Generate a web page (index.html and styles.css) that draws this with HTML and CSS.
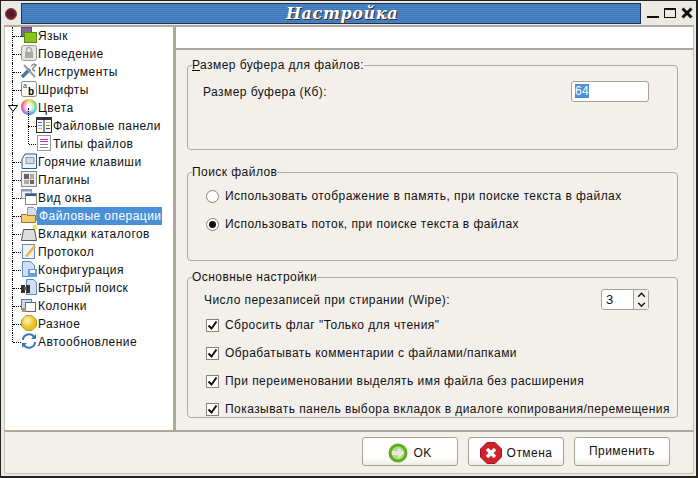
FILE: index.html
```html
<!DOCTYPE html>
<html lang="ru">
<head>
<meta charset="utf-8">
<title>Настройка</title>
<link rel="stylesheet" href="styles.css">
</head>
<body>
<div class="window">
  <header class="titlebar">
    <svg class="app-icon" width="12" height="12" viewBox="0 0 12 12"><circle cx="6" cy="6" r="5.5" fill="#7a1420" stroke="#555"/><circle cx="6" cy="6" r="2.500" fill="#4a1a3a"/></svg>
    <div class="title"><span>Настройка</span></div>
    <div class="wm-buttons">
      <svg width="12" height="12" viewBox="0 0 12 12"><rect x="0" y="9" width="12" height="2" fill="#111"/></svg>
      <svg width="12" height="12" viewBox="0 0 12 12"><rect x="0.5" y="1.500" width="11" height="9" fill="none" stroke="#111"/><rect x="0" y="1" width="12" height="2" fill="#111"/></svg>
      <svg width="12" height="12" viewBox="0 0 12 12"><path d="M1.500 1.500l9 9M10.500 1.500l-9 9" stroke="#111" stroke-width="3"/></svg>
    </div>
  </header>
  <div class="client">
    <div class="main">
      <nav class="tree">
        <div class="row"><span class="dots"></span><svg class="ico" viewBox="0 0 16 16"><rect x="0.5" y="0.5" width="10" height="9" fill="#7d6a9c" stroke="#5a4a76"/><rect x="3.500" y="5.500" width="12" height="10" fill="#8cc21e" stroke="#5b8a10"/></svg><span class="lbl">Язык</span></div>
        <div class="row"><span class="dots"></span><svg class="ico" viewBox="0 0 16 16"><rect x="0.5" y="0.5" width="15" height="15" rx="2" fill="#e8e6e0" stroke="#999"/><rect x="4" y="7" width="8" height="6" fill="#aaa"/><path d="M5.500 7V5a2.500 2.500 0 0 1 5 0v2" fill="none" stroke="#aaa" stroke-width="1.500"/></svg><span class="lbl">Поведение</span></div>
        <div class="row"><span class="dots"></span><svg class="ico" viewBox="0 0 16 16"><path d="M1 14L9 6" stroke="#4a76a8" stroke-width="3.500"/><path d="M3 2l11 12" stroke="#9a9a9a" stroke-width="2"/><path d="M10 3l3-2 2 1-3 3v2l2 1" fill="none" stroke="#888" stroke-width="1.500"/></svg><span class="lbl">Инструменты</span></div>
        <div class="row"><span class="dots"></span><svg class="ico" viewBox="0 0 16 16"><rect x="0.5" y="0.5" width="15" height="15" rx="2" fill="#fff" stroke="#888"/><text x="2" y="7" class="ico-a">a</text><text x="7" y="14" class="ico-b">b</text></svg><span class="lbl">Шрифты</span></div>
        <div class="row"><svg class="expander" width="10" height="7" viewBox="0 0 10 7"><path d="M0.500 0.500h9L5 6.500z" fill="#fff" stroke="#000"/></svg><span class="wheel"></span><span class="lbl">Цвета</span></div>
        <div class="row sub"><span class="dots"></span><svg class="ico" viewBox="0 0 16 16"><rect x="0.5" y="0.5" width="15" height="15" fill="#fff" stroke="#223"/><rect x="0" y="0" width="16" height="3" fill="#334"/><rect x="7.500" y="0" width="1" height="16" fill="#223"/><path d="M2 5.500h4" stroke="#e020a0"/><path d="M2 8.500h4" stroke="#20b0d0"/><path d="M2 11.500h4" stroke="#e0c020"/><path d="M10 5.500h4" stroke="#e0c020"/><path d="M10 8.500h4" stroke="#30b030"/><path d="M10 11.500h4" stroke="#2040e0"/></svg><span class="lbl">Файловые панели</span></div>
        <div class="row sub"><span class="dots"></span><svg class="ico" viewBox="0 0 16 16"><rect x="1.500" y="0.5" width="13" height="15" fill="#fff" stroke="#999"/><path d="M4 4.500h8" stroke="#e020a0"/><path d="M4 6.500h8" stroke="#c020e0"/><path d="M4 9.500h8" stroke="#888"/><path d="M4 12.500h8" stroke="#888"/></svg><span class="lbl">Типы файлов</span></div>
        <div class="row"><span class="dots"></span><svg class="ico" viewBox="0 0 16 16"><path d="M1 15.500V6l3-5h11.500v14.500z" fill="#eef1f5" stroke="#2a5a9a"/><path d="M5 4.500h8v6H5z" fill="#d8dde4" stroke="#8898aa"/></svg><span class="lbl">Горячие клавиши</span></div>
        <div class="row"><span class="dots"></span><svg class="ico" viewBox="0 0 16 16"><rect x="0.5" y="0.5" width="15" height="15" fill="#eee" stroke="#888"/><rect x="3" y="3" width="5" height="5" fill="#666"/><rect x="9" y="3" width="4" height="5" fill="#aaa"/><rect x="3" y="9" width="5" height="4" fill="#aaa"/><rect x="9" y="9" width="4" height="4" fill="#666"/></svg><span class="lbl">Плагины</span></div>
        <div class="row"><span class="dots"></span><svg class="ico" viewBox="0 0 16 16"><rect x="0.5" y="0.5" width="10" height="9" fill="#eee" stroke="#999"/><rect x="0.5" y="0.5" width="10" height="2" fill="#8aa0bc"/><rect x="4.500" y="4.500" width="11" height="11" fill="#fff" stroke="#888"/><rect x="5" y="5" width="10" height="2" fill="#2a5a9a"/></svg><span class="lbl">Вид окна</span></div>
        <div class="row"><span class="dots"></span><svg class="ico" viewBox="0 0 16 16"><path d="M6.500 0.500h6l3 3v10h-9z" fill="#cfe0f5" stroke="#7a9ac8"/><path d="M0.500 7.500h5l1 1h8v7h-14z" fill="#f5cc70" stroke="#a07820"/></svg><span class="lbl selected">Файловые операции</span></div>
        <div class="row"><span class="dots"></span><svg class="ico" viewBox="0 0 16 16"><path d="M0.500 15.500l2-11h11l2 11z" fill="#ddd" stroke="#555"/><rect x="12" y="0" width="4" height="4" fill="#f0e040"/></svg><span class="lbl">Вкладки каталогов</span></div>
        <div class="row"><span class="dots"></span><svg class="ico" viewBox="0 0 16 16"><rect x="1.500" y="1.500" width="12" height="14" fill="#eef3fa" stroke="#6a8ab8"/><path d="M4 13L13 2l2 2-9 10z" fill="#f0b040"/></svg><span class="lbl">Протокол</span></div>
        <div class="row"><span class="dots"></span><svg class="ico" viewBox="0 0 16 16"><path d="M1.500 0.500h8l4 4v11h-12z" fill="#cfe0f5" stroke="#5a8ac8"/><rect x="7" y="8" width="9" height="8" fill="#6aa0d8"/><rect x="9" y="9" width="5" height="3" fill="#fff"/></svg><span class="lbl">Конфигурация</span></div>
        <div class="row"><span class="dots"></span><svg class="ico" viewBox="0 0 16 16"><path d="M5.500 0.500h7l3 3v12h-10z" fill="#cfe0f5" stroke="#5a8ac8"/><rect x="0" y="6" width="4" height="8" fill="#333"/><rect x="5" y="6" width="4" height="8" fill="#333"/><rect x="3" y="8" width="3" height="3" fill="#555"/></svg><span class="lbl">Быстрый поиск</span></div>
        <div class="row"><span class="dots"></span><svg class="ico" viewBox="0 0 16 16"><rect x="0.5" y="2.500" width="10" height="10" fill="#cdd8ea" stroke="#5a7ab0"/><rect x="4.500" y="5.500" width="10" height="9" fill="#fff" stroke="#667"/><rect x="1" y="11" width="4" height="4" fill="#c08a70"/></svg><span class="lbl">Колонки</span></div>
        <div class="row"><span class="dots"></span><svg class="ico" viewBox="0 0 16 16"><defs><radialGradient id="y" cx="0.4" cy="0.35"><stop offset="0" stop-color="#fff6b0"/><stop offset="1" stop-color="#e8c020"/></radialGradient></defs><path d="M5 0.500h6l4.500 4.500v6L11 15.500H5L0.500 11V5z" fill="url(#y)" stroke="#b89a20"/></svg><span class="lbl">Разное</span></div>
        <div class="row last"><span class="dots"></span><svg class="ico" viewBox="0 0 16 16"><path d="M2 7a6 6 0 0 1 11-3" fill="none" stroke="#3a78b8" stroke-width="2"/><path d="M14 9a6 6 0 0 1-11 3" fill="none" stroke="#3a78b8" stroke-width="2"/><path d="M15 1v5h-5z" fill="#3a78b8"/><path d="M1 15v-5h5z" fill="#3a78b8"/></svg><span class="lbl">Автообновление</span></div>
      </nav>
      <div class="pane">
        <div class="page-title"></div>
        <div class="page">
          <fieldset class="group g-buffer">
            <legend><u>Р</u>азмер буфера для файлов:</legend>
            <div class="buffer-row">
              <span>Размер буфера (Кб):</span>
              <div class="input"><span class="sel">64</span></div>
            </div>
          </fieldset>
          <fieldset class="group g-search">
            <legend>Поиск файлов</legend>
            <label class="opt"><span class="radio"></span>Использовать отображение в память, при поиске текста в файлах</label>
            <label class="opt"><span class="radio on"></span>Использовать поток, при поиске текста в файлах</label>
          </fieldset>
          <fieldset class="group g-main">
            <legend>Основные настройки</legend>
            <div class="wipe-row">
              <span>Число перезаписей при стирании (Wipe):</span>
              <div class="spin">
                <span class="spin-val">3</span>
                <span class="spin-btns">
                  <svg width="15" height="10" viewBox="0 0 15 10"><path d="M4 7l3.500-3.500L11 7" fill="none" stroke="#111" stroke-width="1.500"/></svg>
                  <svg width="15" height="10" viewBox="0 0 15 10"><path d="M4 3l3.500 3.500L11 3" fill="none" stroke="#111" stroke-width="1.500"/></svg>
                </span>
              </div>
            </div>
            <label class="chk"><span class="box"><svg width="11" height="11" viewBox="0 0 11 11"><path d="M1.500 5.500l3 3 5-7" fill="none" stroke="#111" stroke-width="2"/></svg></span>Сбросить флаг "Только для чтения"</label>
            <label class="chk"><span class="box"><svg width="11" height="11" viewBox="0 0 11 11"><path d="M1.500 5.500l3 3 5-7" fill="none" stroke="#111" stroke-width="2"/></svg></span>Обрабатывать комментарии с файлами/папками</label>
            <label class="chk"><span class="box"><svg width="11" height="11" viewBox="0 0 11 11"><path d="M1.500 5.500l3 3 5-7" fill="none" stroke="#111" stroke-width="2"/></svg></span>При переименовании выделять имя файла без расширения</label>
            <label class="chk"><span class="box"><svg width="11" height="11" viewBox="0 0 11 11"><path d="M1.500 5.500l3 3 5-7" fill="none" stroke="#111" stroke-width="2"/></svg></span>Показывать панель выбора вкладок в диалоге копирования/перемещения</label>
          </fieldset>
        </div>
      </div>
    </div>
    <footer class="actions">
      <button class="btn btn-icon"><svg width="20" height="20" viewBox="0 0 20 20"><circle cx="10" cy="10" r="9.500" fill="#5fae1e"/><circle cx="10" cy="10" r="6.500" fill="#b5dc8c"/><path d="M4 8h6V4.500l6 5.500-6 5.500V12H4z" fill="#e8e8e0"/></svg>OK</button>
      <button class="btn btn-icon"><svg width="22" height="22" viewBox="0 0 22 22"><path d="M7 0.500h8L21.500 7v8L15 21.500H7L0.500 15V7z" fill="#d0202c" stroke="#a01822"/><path d="M7 7l8 8M15 7l-8 8" stroke="#fff" stroke-width="3.500"/></svg>Отмена</button>
      <button class="btn">Применить</button>
    </footer>
  </div>
</div>
</body>
</html>
```
FILE: styles.css
```css
* { box-sizing: border-box; }
html, body { margin: 0; padding: 0; }
body {
  width: 698px;
  height: 478px;
  overflow: hidden;
  font-family: "Liberation Sans", Arial, sans-serif;
  font-size: 12px;
  letter-spacing: 0.45px;
  color: #111;
}
.window {
  width: 698px;
  height: 478px;
  background: #ece9e2;
  border: 1px solid #222;
  border-width: 1px 2px 2px 1px;
  display: flex;
  flex-direction: column;
}
.titlebar {
  height: 23px;
  display: flex;
  align-items: center;
  padding: 1px 3px 0 4px;
  flex: none;
}
.app-icon { margin-right: 4px; margin-top: 1px; flex: none; }
.title {
  flex: none;
  width: 620px;
  height: 21px;
  border: 1px solid #1c3350;
  background: repeating-linear-gradient(#4a86c6 0 1px, #3f79b8 1px 2px);
  display: flex;
  align-items: center;
  justify-content: center;
  padding-left: 22px;
}
.title span {
  font-family: "DejaVu Serif", serif;
  font-style: italic;
  font-weight: bold;
  font-size: 16px;
  letter-spacing: 0.6px;
  color: #fff;
  text-shadow: 1px 1px #3a2a20;
}
.wm-buttons { display: flex; gap: 5px; margin-left: 6px; }
.client {
  flex: 1;
  display: flex;
  flex-direction: column;
  padding: 1px 2px 2px 3px;
  min-height: 0;
}
.main { flex: none; height: 405px; display: flex; }
.tree {
  flex: none;
  width: 170px;
  background: #fff;
  border-top: 2px solid #b0a898;
  border-left: 1px solid #c8c2b4;
  border-right: 1px solid #b0a898;
  margin: 0;
}
.row {
  height: 18px;
  display: flex;
  align-items: center;
  position: relative;
  padding-left: 16px;
  white-space: nowrap;
}
.row::before {
  content: "";
  position: absolute;
  left: 7px;
  top: 0;
  bottom: 0;
  border-left: 1px dotted #000;
}
.row.last::before { bottom: 9px; }
.row.sub { padding-left: 31px; }
.row.sub::after {
  content: "";
  position: absolute;
  left: 23px;
  top: -9px;
  height: 18px;
  border-left: 1px dotted #000;
}
.dots {
  position: absolute;
  left: 8px;
  top: 9px;
  width: 8px;
  border-top: 1px dotted #000;
}
.row.sub .dots { left: 24px; width: 7px; }
.expander { position: absolute; left: 3px; top: 6px; z-index: 1; }
.ico { width: 16px; height: 16px; flex: none; margin-top: -2px; overflow: visible; }
.wheel {
  width: 16px;
  height: 16px;
  flex: none;
  margin-top: -2px;
  border-radius: 50%;
  background:
    radial-gradient(circle, #fff 0, #fff 20%, rgba(255,255,255,0) 75%),
    conic-gradient(#f0d020, #50c840, #20c0c8, #3060e0, #c030d0, #f03040, #f0d020);
}
.ico-a { font-size: 7px; fill: #333; }
.ico-b { font-size: 10px; font-weight: bold; fill: #000; }
.lbl { padding: 0 1px; height: 18px; line-height: 18px; }
.selected { background: #4a90d9; color: #fff; padding-left: 2px; }
.pane { flex: 1; display: flex; flex-direction: column; min-width: 0; }
.page-title {
  height: 23px;
  background: #fff;
  border-top: 2px solid #b0a898;
  border-left: 2px solid #b0a898;
  border-right: 1px solid #c8c2b4;
  flex: none;
}
.page {
  flex: 1;
  background: #f3f0ec;
  border-top: 2px solid #b0a898;
  border-left: 2px solid #b0a898;
  border-right: 1px solid #c8c2b4;
  padding: 8px 15px 0 11px;
  display: flex;
  flex-direction: column;
}
.group {
  margin: 0;
  border: 1px solid #b0a898;
  border-radius: 4px;
  padding: 0;
  min-width: 0;
  flex: none;
}
.group legend { padding: 0; margin-left: 4px; line-height: 14px; }
.g-buffer { height: 92px; }
.buffer-row {
  display: flex;
  align-items: center;
  justify-content: space-between;
  padding: 9px 28px 0 15px;
}
.input {
  width: 78px;
  height: 21px;
  background: #fff;
  border: 1px solid #a8a090;
  border-radius: 3px;
  padding: 2px 3px;
  line-height: 14px;
}
.sel { background: #4a90d9; color: #fff; display: inline-block; height: 14px; }
.g-search { height: 96px; margin-top: 15px; padding-top: 3px; }
.opt { display: flex; align-items: center; height: 28px; padding-left: 18px; white-space: nowrap; }
.radio {
  width: 13px;
  height: 13px;
  border-radius: 50%;
  border: 1px solid #8a8478;
  background: #fff;
  margin-right: 6px;
  flex: none;
  position: relative;
}
.radio.on::after {
  content: "";
  position: absolute;
  left: 2px;
  top: 2px;
  width: 7px;
  height: 7px;
  border-radius: 50%;
  background: #111;
}
.g-main { height: 148px; margin-top: 9px; padding-top: 5px; }
.wipe-row {
  display: flex;
  align-items: center;
  justify-content: space-between;
  height: 21px;
  padding: 0 28px 0 16px;
}
.spin {
  width: 48px;
  height: 21px;
  display: flex;
  background: #fff;
  border: 1px solid #a8a090;
  border-radius: 3px;
}
.spin-val { flex: 1; padding-left: 4px; line-height: 19px; font-size: 13px; }
.spin-btns {
  width: 15px;
  display: flex;
  flex-direction: column;
  border-left: 1px solid #a8a090;
  background: #f3f0ec;
}
.chk {
  display: flex;
  align-items: center;
  height: 14px;
  margin-top: 14px;
  padding-left: 18px;
  white-space: nowrap;
}
.wipe-row + .chk { margin-top: 8px; }
.box {
  width: 13px;
  height: 13px;
  border: 1px solid #8a8478;
  background: #fff;
  margin-right: 6px;
  flex: none;
  display: flex;
  align-items: center;
  justify-content: center;
}
.actions {
  flex: 1;
  display: flex;
  justify-content: flex-end;
  gap: 10px;
  align-items: center;
  padding: 0 23px 3px 0;
  background: #f3f0ec;
  border: 1px solid #c8c2b4;
  border-top: 2px solid #b0a898;
  border-radius: 0 0 3px 3px;
}
.btn {
  font: inherit;
  letter-spacing: inherit;
  color: #111;
  width: 96px;
  height: 29px;
  border: 1px solid #a8a090;
  border-radius: 3px;
  background: linear-gradient(#fff 70%, #f0ede8);
  display: flex;
  align-items: center;
  justify-content: center;
  gap: 5px;
  padding: 0;
}
.btn-icon { padding-top: 4px; }
```
